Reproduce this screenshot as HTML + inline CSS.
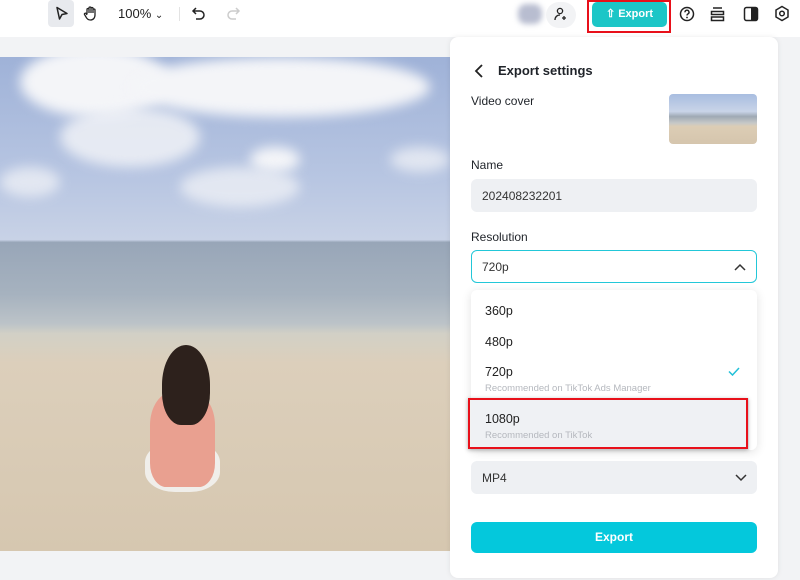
<!DOCTYPE html>
<html><head><style>
*{margin:0;padding:0;box-sizing:border-box}
body{width:800px;height:580px;background:#f2f3f5;font-family:"Liberation Sans",sans-serif;position:relative;overflow:hidden;color:#1f2329}
.top{position:absolute;left:0;top:0;width:800px;height:37px;background:#fff}
.photo{position:absolute;left:0;top:57px;width:460px;height:494px;overflow:hidden;
background:linear-gradient(180deg,#9fb2d8 0%,#b8c6e2 25%,#c8d2e6 37%,#98a6b8 37.5%,#a6b2bf 48%,#bcc3c8 54%,#d2d0c6 56%,#dccfbb 62%,#d6c7b0 100%)}
.cloud{position:absolute;background:#f4f5f8;border-radius:50%;filter:blur(6px)}
.panel{position:absolute;left:450px;top:37px;width:328px;height:541px;background:#fff;border-radius:8px;box-shadow:0 0 6px rgba(0,0,0,.08)}
.lbl{position:absolute;left:21px;font-size:12px;color:#1f2329}
.field{position:absolute;left:21px;width:286px;height:33px;border-radius:6px;background:#eef0f3;font-size:12px;padding:10px 11px;color:#333}
.dd{position:absolute;left:21px;top:253px;width:286px;height:160px;background:#fff;border-radius:6px;box-shadow:0 2px 10px rgba(0,0,0,.12)}
.opt{position:absolute;left:14px;font-size:12.5px;color:#222}
.sub{position:absolute;left:14px;font-size:9.5px;color:#b5b8be}
</style></head><body>
<div class="top"></div>
<div style="position:absolute;left:48px;top:0;width:26px;height:27px;background:#e8eaee;border-radius:4px"></div>
<svg style="position:absolute;left:55px;top:6px" width="14" height="15" viewBox="0 0 14 15"><path d="M2 1.5L12 7.5 7 8.5 4.5 13z" fill="none" stroke="#222" stroke-width="1.5" stroke-linejoin="round"/></svg>
<svg style="position:absolute;left:83px;top:5px" width="16" height="17" viewBox="0 0 16 17"><path d="M4 9V4.5a1 1 0 012 0V8M6 8V3a1 1 0 012 0v5M8 8V3.5a1 1 0 012 0V8M10 8V5a1 1 0 012 0v5c0 3-2 5-4.5 5S4 14 3 12L1.5 9.5a1 1 0 011.7-1L4 10" fill="none" stroke="#222" stroke-width="1.3"/></svg>
<div style="position:absolute;left:118px;top:6px;font-size:13px;color:#222">100% <span style="font-size:10px">&#8964;</span></div>
<div style="position:absolute;left:179px;top:7px;width:1px;height:14px;background:#e3e3e3"></div>
<svg style="position:absolute;left:191px;top:6px" width="16" height="15" viewBox="0 0 16 15"><path d="M5 2L2 5l3 3M2 5h7a4 4 0 010 8H5" fill="none" stroke="#222" stroke-width="1.5"/></svg>
<svg style="position:absolute;left:225px;top:6px" width="16" height="15" viewBox="0 0 16 15"><path d="M11 2l3 3-3 3M14 5H7a4 4 0 000 8h4" fill="none" stroke="#ccc" stroke-width="1.5"/></svg>
<div style="position:absolute;left:518px;top:4px;width:24px;height:20px;background:#b8bdd0;border-radius:8px;filter:blur(3px)"></div>
<div style="position:absolute;left:546px;top:2px;width:30px;height:26px;background:#f2f3f5;border-radius:13px"></div>
<svg style="position:absolute;left:554px;top:7px" width="14" height="14" viewBox="0 0 14 14"><circle cx="6" cy="4" r="2.6" fill="none" stroke="#222" stroke-width="1.3"/><path d="M1 13c0-3 2-5 5-5M10 9v4M8 11h4" fill="none" stroke="#222" stroke-width="1.3"/></svg>
<div style="position:absolute;left:592px;top:2px;width:75px;height:25px;background:#1cc6c7;border-radius:5px;color:#fff;font-weight:bold;font-size:11px;line-height:25px;text-align:center">&#8679; Export</div>
<div style="position:absolute;left:587px;top:0;width:84px;height:33px;border:2px solid #e8101a"></div>
<svg style="position:absolute;left:679px;top:6px" width="16" height="16" viewBox="0 0 16 16"><circle cx="8" cy="8" r="6.5" fill="none" stroke="#222" stroke-width="1.5"/><path d="M6 6.3a2 2 0 113 1.6c-.8.4-1 .8-1 1.6" fill="none" stroke="#222" stroke-width="1.4"/><circle cx="8" cy="11.5" r=".9" fill="#222"/></svg>
<svg style="position:absolute;left:710px;top:6px" width="15" height="16" viewBox="0 0 15 16"><path d="M3 2h9M1.5 5.5h12v3h-12zM1.5 11h12v3.5h-12z" fill="none" stroke="#222" stroke-width="1.5"/></svg>
<svg style="position:absolute;left:743px;top:6px" width="16" height="16" viewBox="0 0 16 16"><rect x="1.5" y="1.5" width="13" height="13" rx="2" fill="none" stroke="#222" stroke-width="1.5"/><rect x="8" y="1.5" width="6.5" height="13" fill="#222"/></svg>
<svg style="position:absolute;left:774px;top:5px" width="16" height="17" viewBox="0 0 16 17"><path d="M8 1.5l6 3.5v7l-6 3.5-6-3.5V5z" fill="none" stroke="#222" stroke-width="1.5"/><circle cx="8" cy="8.5" r="2.3" fill="none" stroke="#222" stroke-width="1.5"/></svg>

<div class="photo">
<div class="cloud" style="left:20px;top:-10px;width:150px;height:70px"></div>
<div class="cloud" style="left:130px;top:0;width:300px;height:60px"></div>
<div class="cloud" style="left:60px;top:50px;width:140px;height:60px;opacity:.8"></div>
<div class="cloud" style="left:250px;top:90px;width:50px;height:25px"></div>
<div class="cloud" style="left:180px;top:110px;width:120px;height:40px;opacity:.7"></div>
<div class="cloud" style="left:0;top:110px;width:60px;height:30px;opacity:.7"></div>
<div class="cloud" style="left:390px;top:90px;width:60px;height:25px;opacity:.7"></div>
<div style="position:absolute;left:145px;top:385px;width:75px;height:50px;background:#f0eeea;border-radius:40%"></div>
<div style="position:absolute;left:150px;top:335px;width:65px;height:95px;background:#e9a090;border-radius:35% 35% 25% 25%"></div>
<div style="position:absolute;left:162px;top:288px;width:48px;height:80px;background:#2d211c;border-radius:50% 50% 40% 40%"></div>
</div>

<div class="panel">
<svg style="position:absolute;left:24px;top:27px" width="10" height="14" viewBox="0 0 10 14"><path d="M8 1L2 7l6 6" fill="none" stroke="#222" stroke-width="1.8"/></svg>
<div style="position:absolute;left:48px;top:26px;font-size:13px;font-weight:bold">Export settings</div>
<div class="lbl" style="top:57px">Video cover</div>
<div style="position:absolute;left:219px;top:57px;width:88px;height:50px;border-radius:4px;background:linear-gradient(180deg,#a8bde0 0%,#c9d4e8 35%,#9fa9b4 45%,#c6c8c8 58%,#dccdb5 65%,#d5c5ad 100%)"></div>
<div class="lbl" style="top:121px">Name</div>
<div class="field" style="top:142px">202408232201</div>
<div class="lbl" style="top:193px">Resolution</div>
<div class="field" style="top:213px;background:#fff;border:1.5px solid #22c7d8;padding:9px 10px">720p<svg style="position:absolute;right:10px;top:12px" width="12" height="8" viewBox="0 0 12 8"><path d="M1 7l5-5 5 5" fill="none" stroke="#333" stroke-width="1.5"/></svg></div>
<div class="dd">
<div class="opt" style="top:14px">360p</div>
<div class="opt" style="top:45px">480p</div>
<div class="opt" style="top:75px">720p</div>
<div class="sub" style="top:93px">Recommended on TikTok Ads Manager</div>
<svg style="position:absolute;left:257px;top:77px" width="12" height="9" viewBox="0 0 12 9"><path d="M1 4.5l3.5 3.5L11 1" fill="none" stroke="#22c0d8" stroke-width="1.5"/></svg>
<div style="position:absolute;left:0;top:108px;width:278px;height:52px;background:#eff1f4"></div>
<div class="opt" style="top:122px">1080p</div>
<div class="sub" style="top:140px">Recommended on TikTok</div>
</div>
<div style="position:absolute;left:18px;top:361px;width:280px;height:51px;border:2.5px solid #e8101a;box-shadow:0 1px 4px rgba(0,0,0,.3)"></div>
<div class="field" style="top:424px">MP4<svg style="position:absolute;right:10px;top:13px" width="12" height="8" viewBox="0 0 12 8"><path d="M1 1l5 5 5-5" fill="none" stroke="#333" stroke-width="1.5"/></svg></div>
<div style="position:absolute;left:21px;top:485px;width:286px;height:31px;background:#04c8dc;border-radius:6px;color:#fff;font-weight:bold;font-size:12px;line-height:31px;text-align:center">Export</div>
</div>
</body></html>
